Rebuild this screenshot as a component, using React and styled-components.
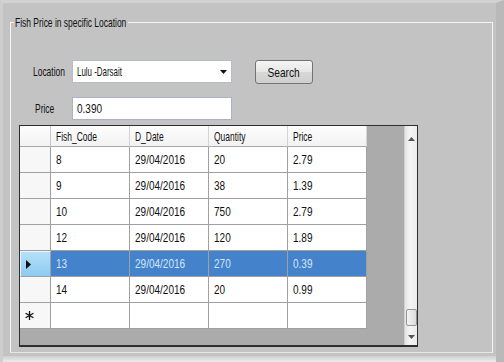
import React from 'react'
import styled, { createGlobalStyle } from 'styled-components'

const GlobalStyle = createGlobalStyle`
  html, body {
    margin: 0;
    padding: 0;
    background: #c3c3c3;
  }
  * {
    box-sizing: border-box;
  }
`

const rows = [
  { code: '8', date: '29/04/2016', qty: '20', price: '2.79' },
  { code: '9', date: '29/04/2016', qty: '38', price: '1.39' },
  { code: '10', date: '29/04/2016', qty: '750', price: '2.79' },
  { code: '12', date: '29/04/2016', qty: '120', price: '1.89' },
  { code: '13', date: '29/04/2016', qty: '270', price: '0.39', selected: true },
  { code: '14', date: '29/04/2016', qty: '20', price: '0.99' },
]

const columns = ['Fish_Code', 'D_Date', 'Quantity', 'Price']

// the old WinForms font in the shot is narrower than Arial, so text is squeezed
const NUM = 0.77

const App = () => {
  return (
    <React.Fragment>
      <GlobalStyle />
      <Page>
        <GroupBox>
          <Legend>
            <T>Fish Price in specific Location</T>
          </Legend>
          <FormRow>
            <Label indent={22}>
              <T>Location</T>
            </Label>
            <Combo>
              <T sx={0.61}>Lulu -Darsait</T>
              <svg width="7" height="4" viewBox="0 0 7 4">
                <path d="M0 0 L7 0 L3.5 4 Z" fill="#111" />
              </svg>
            </Combo>
            <SearchBtn>
              <T sx={0.78} center>
                Search
              </T>
            </SearchBtn>
          </FormRow>
          <FormRow gap={13}>
            <Label indent={24}>
              <T>Price</T>
            </Label>
            <TextBox>
              <T sx={NUM}>0.390</T>
            </TextBox>
          </FormRow>
          <DataGrid>
            <Table>
              <Corner />
              {columns.map((c) => (
                <HeaderCell key={c}>
                  <T>{c}</T>
                </HeaderCell>
              ))}
              {rows.map((r) => (
                <React.Fragment key={r.code}>
                  <RowHeader selected={r.selected}>
                    {r.selected && (
                      <svg width="5" height="9" viewBox="0 0 5 9">
                        <path d="M0 0 L5 4.5 L0 9 Z" fill="#111" />
                      </svg>
                    )}
                  </RowHeader>
                  <Cell selected={r.selected}>
                    <T sx={NUM}>{r.code}</T>
                  </Cell>
                  <Cell selected={r.selected}>
                    <T sx={NUM}>{r.date}</T>
                  </Cell>
                  <Cell selected={r.selected}>
                    <T sx={NUM}>{r.qty}</T>
                  </Cell>
                  <Cell selected={r.selected}>
                    <T sx={NUM}>{r.price}</T>
                  </Cell>
                </React.Fragment>
              ))}
              <RowHeader>
                <svg width="9" height="9" viewBox="0 0 9 9">
                  <g stroke="#111" strokeWidth="1.3">
                    <path d="M4.5 0 V9" />
                    <path d="M0.6 2.2 L8.4 6.8" />
                    <path d="M0.6 6.8 L8.4 2.2" />
                  </g>
                </svg>
              </RowHeader>
              <Cell />
              <Cell />
              <Cell />
              <Cell />
            </Table>
            <ScrollBar>
              <svg width="7" height="4" viewBox="0 0 7 4">
                <path d="M0 4 L7 4 L3.5 0 Z" fill="#555" />
              </svg>
              <ScrollSpace />
              <Thumb />
              <svg width="7" height="4" viewBox="0 0 7 4">
                <path d="M0 0 L7 0 L3.5 4 Z" fill="#555" />
              </svg>
            </ScrollBar>
          </DataGrid>
        </GroupBox>
        <Footer />
      </Page>
    </React.Fragment>
  )
}

const font = `
  font-family: "Liberation Sans", Arial, sans-serif;
  font-size: 13px;
  color: #111;
`

const T = styled.span`
  display: inline-block;
  white-space: nowrap;
  transform: scaleX(${(p) => p.sx || 0.65});
  transform-origin: ${(p) => (p.center ? 'center' : 'left')} center;
`

const Page = styled.div`
  width: 504px;
  height: 362px;
  display: flex;
  flex-direction: column;
  background: #c3c3c3;
  border-top: 3px solid #d2d2d2;
  border-left: 3px solid #cecece;
  border-right: 8px solid #b9b9b9;
  overflow: hidden;
  ${font}
`

const GroupBox = styled.fieldset`
  margin: 13px 0 0 7px;
  padding: 0 0 5px 0;
  width: 483px;
  border: 1px solid #f4f4f4;
  border-bottom-color: #e8e8e8;
  min-width: 0;
`

const Legend = styled.legend`
  margin-left: 3px;
  padding: 0 1px;
  width: 114px;
  line-height: 13px;
  overflow: visible;
  ${font}
`

const FormRow = styled.div`
  display: flex;
  align-items: center;
  margin-top: ${(p) => (p.gap !== undefined ? p.gap : 30)}px;
`

const Label = styled.div`
  width: 61px;
  padding-left: ${(p) => p.indent}px;
  white-space: nowrap;
`

const Combo = styled.div`
  width: 160px;
  height: 23px;
  display: flex;
  align-items: center;
  justify-content: space-between;
  padding: 0 4px 0 4px;
  background: #fff;
  border: 1px solid #b8bcc4;
`

const TextBox = styled.div`
  width: 160px;
  height: 23px;
  display: flex;
  align-items: center;
  padding-left: 4px;
  background: #fff;
  border: 1px solid #a8b4c4;
`

const SearchBtn = styled.button`
  margin: 1px 0 0 23px;
  width: 58px;
  height: 24px;
  border: 1px solid #747474;
  border-radius: 3px;
  background: linear-gradient(#f4f4f4, #e6e6e6 50%, #d8d8d8 51%, #cfcfcf);
  ${font}
  padding: 0;
`

const DataGrid = styled.div`
  margin: 5px 0 0 8px;
  width: 399px;
  height: 222px;
  display: flex;
  border: 1px solid #2e2e2e;
  border-bottom-width: 2px;
  background: #ababab;
`

const Table = styled.div`
  flex: 1;
  display: grid;
  grid-template-columns: 31px repeat(4, 79px);
  grid-template-rows: 21px;
  grid-auto-rows: 26px;
  align-content: start;
`

const Corner = styled.div`
  background: linear-gradient(#fdfdfd, #f2f2f2);
  border-right: 1px solid #c8c8c8;
  border-bottom: 1px solid #a8a8a8;
`

const HeaderCell = styled.div`
  display: flex;
  align-items: center;
  padding-left: 5px;
  background: linear-gradient(#fdfdfd, #f2f2f2);
  border-right: 1px solid #d4d4d4;
  border-bottom: 1px solid #a8a8a8;
`

const RowHeader = styled.div`
  display: flex;
  align-items: center;
  padding-left: 5px;
  background: ${(p) => (p.selected ? 'linear-gradient(#b6e0f8, #8ccbf0)' : '#f7f7f7')};
  border: ${(p) => (p.selected ? '1px solid #e8f4fc' : 'none')};
  border-right: 1px solid #a0a0a0;
  border-bottom: 1px solid #a0a0a0;
`

const Cell = styled.div`
  display: flex;
  align-items: center;
  padding-left: 5px;
  background: ${(p) => (p.selected ? '#4482cb' : '#fff')};
  color: ${(p) => (p.selected ? '#d2e6fb' : '#111')};
  border-right: 1px solid #a0a0a0;
  border-bottom: 1px solid #a0a0a0;
`

const ScrollBar = styled.div`
  width: 13px;
  display: flex;
  flex-direction: column;
  align-items: center;
  padding: 11px 0 6px;
  background: linear-gradient(90deg, #e4e4e4, #f4f4f4 40%, #ececec);
  border-left: 1px solid #d0d0d0;
`

const ScrollSpace = styled.div`
  flex: 1;
`

const Thumb = styled.div`
  width: 11px;
  height: 17px;
  margin-bottom: 9px;
  border: 1px solid #959595;
  border-radius: 2px;
  background: linear-gradient(90deg, #f2f2f2, #dcdcdc);
`

const Footer = styled.div`
  flex: 1;
  margin-top: 3px;
  background: linear-gradient(#d0d0d0, #ececec);
`

export default App
